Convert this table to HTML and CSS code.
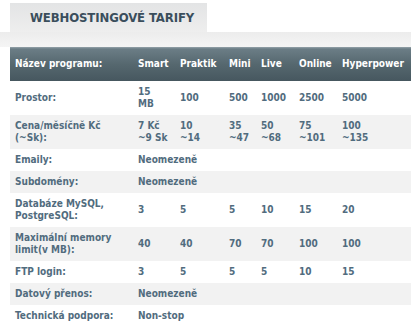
FILE: index.html
```html
<!DOCTYPE html>
<html lang="cs">
<head>
<meta charset="utf-8">
<title>Webhostingové tarify</title>
<link rel="stylesheet" href="styles.css">
</head>
<body>
<div class="tabs"><div class="tab">WEBHOSTINGOVÉ TARIFY</div></div>
<div class="band"></div>
<table class="tarify">
  <colgroup>
    <col class="c-label"><col class="c-smart"><col class="c-praktik"><col class="c-mini"><col class="c-live"><col class="c-online"><col class="c-hyper">
  </colgroup>
  <thead>
    <tr><th>Název programu:</th><th>Smart</th><th>Praktik</th><th>Mini</th><th>Live</th><th>Online</th><th>Hyperpower</th></tr>
  </thead>
  <tbody>
    <tr class="tall"><td>Prostor:</td><td>15<br>MB</td><td>100</td><td>500</td><td>1000</td><td>2500</td><td>5000</td></tr>
    <tr class="tall alt"><td>Cena/měsíčně Kč<br>(~Sk):</td><td>7 Kč<br>~9 Sk</td><td>10<br>~14</td><td>35<br>~47</td><td>50<br>~68</td><td>75<br>~101</td><td>100<br>~135</td></tr>
    <tr><td>Emaily:</td><td colspan="6">Neomezeně</td></tr>
    <tr class="alt"><td>Subdomény:</td><td colspan="6">Neomezeně</td></tr>
    <tr class="tall"><td>Databáze MySQL,<br>PostgreSQL:</td><td>3</td><td>5</td><td>5</td><td>10</td><td>15</td><td>20</td></tr>
    <tr class="tall alt"><td>Maximální memory<br>limit(v MB):</td><td>40</td><td>40</td><td>70</td><td>70</td><td>100</td><td>100</td></tr>
    <tr><td>FTP login:</td><td>3</td><td>5</td><td>5</td><td>5</td><td>10</td><td>15</td></tr>
    <tr class="alt"><td>Datový přenos:</td><td colspan="6">Neomezeně</td></tr>
    <tr><td>Technická podpora:</td><td colspan="6">Non-stop</td></tr>
  </tbody>
</table>
</body>
</html>
```
FILE: styles.css
```css
html, body {
  margin: 0;
  padding: 0;
  background: #ffffff;
}
body {
  font-family: "DejaVu Sans Condensed", "DejaVu Sans", sans-serif;
  font-stretch: condensed;
  width: 411px;
  overflow: hidden;
}
.tabs {
  padding: 3px 0 0 10px;
  display: flex;
}
.tab {
  width: 197px;
  height: 29px;
  box-sizing: border-box;
  padding-left: 20px;
  display: flex;
  align-items: center;
  background: linear-gradient(to bottom, #e3e4e5, #eeeeee);
  color: #3a4e5c;
  font-weight: bold;
  font-size: 13px;
  letter-spacing: -0.1px;
}
.band {
  height: 15px;
  background: linear-gradient(to bottom, #ececec, #f5f5f5);
}
.tarify {
  margin-left: 10px;
  width: 401px;
  border-collapse: collapse;
  table-layout: fixed;
  font-size: 10px;
  font-weight: bold;
  color: #516c7e;
}
.c-label { width: 123px; }
.c-smart { width: 42px; }
.c-praktik { width: 49px; }
.c-mini { width: 32px; }
.c-live { width: 38px; }
.c-online { width: 43px; }
.c-hyper { width: 74px; }
.tarify th, .tarify td {
  text-align: left;
  vertical-align: middle;
  padding: 0 0 0 5px;
  white-space: nowrap;
  line-height: 12px;
}
.tarify thead tr {
  height: 34px;
  background: linear-gradient(to bottom, #95a3aa 0, #6b7d86 2px, #56686f 50%, #46575f 100%);
}
.tarify th {
  color: #ffffff;
  font-weight: bold;
}
.tarify tbody tr { height: 22px; }
.tarify tbody tr.tall { height: 34px; }
.tarify tbody tr.alt { background: #f2f2f2; }
```
